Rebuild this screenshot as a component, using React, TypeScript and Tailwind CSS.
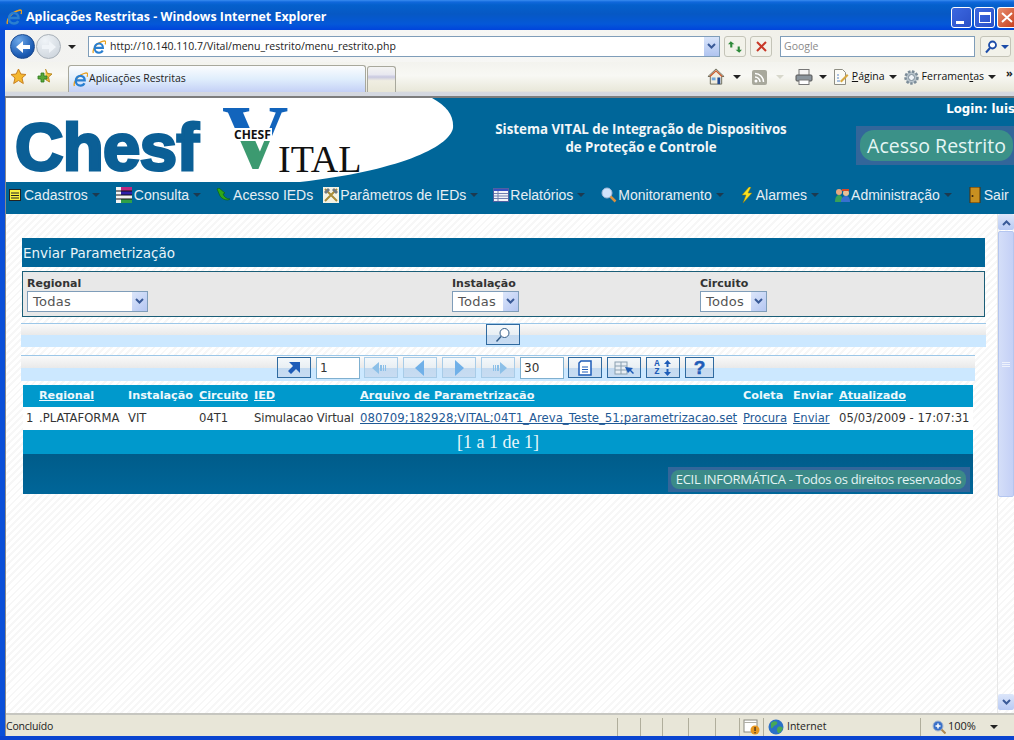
import type { ReactNode } from "react";

const tahoma = "font-['DejaVu_Sans',sans-serif]";

const IeIcon = ({ size = 16 }: { size?: number }) => (
  <svg width={size} height={size} viewBox="0 0 16 16" aria-hidden="true">
    <path d="M1.500 15C0 11 5 3 14 1c2 0 2 2 1 4" fill="none" stroke="#e8a020" strokeWidth="1.400" />
    <path d="M3.500 9H12.500C12.500 6 10.500 4 8 4C5 4 3 6.500 3 9.500C3 12.500 5 14.500 8 14.500C10 14.500 11.500 13.500 12.200 12" fill="none" stroke="#2a7fd0" strokeWidth="2.400" />
  </svg>
);

const Arrow = ({ dir, color = "white" }: { dir: "left" | "right"; color?: string }) => (
  <svg width="18" height="16" viewBox="0 0 18 16" aria-hidden="true">
    <path
      d={dir === "left" ? "M2 8l7-6v4h7v4H9v4z" : "M16 8L9 2v4H2v4h7v4z"}
      fill={color}
    />
  </svg>
);

const Caret = ({ className = "" }: { className?: string }) => (
  <span className={`inline-block h-0 w-0 border-x-[4px] border-t-[4px] border-x-transparent ${className}`} />
);

const SmallChevron = () => (
  <svg width="9" height="7" viewBox="0 0 9 7" aria-hidden="true">
    <path d="M1 1l3.500 3.500L8 1" fill="none" stroke="#3a5a98" strokeWidth="2" />
  </svg>
);

const ToolbarIcons = () => (
  <div className="ml-auto flex items-center self-center font-['Open_Sans',sans-serif] text-[10.500px] text-[#222]">
    <svg width="18" height="18" viewBox="0 0 19 19" aria-hidden="true">
      <path d="M9.500 1L1 9h2.500v8h12V9H18z" fill="#f1ede0" stroke="#6b6b5a" />
      <path d="M3 9l6.500-6L16 9" fill="none" stroke="#c75a2e" strokeWidth="1.500" />
      <rect x="11" y="10" width="3" height="7" fill="#234a8f" />
      <rect x="5" y="10" width="4" height="3" fill="#6fa6dc" />
    </svg>
    <Caret className="ml-[8px] border-t-[#222]" />
    <div className="ml-[11px] flex h-[15px] w-[15px] items-center justify-center rounded-[2px] bg-[#a8a89c]">
      <svg width="11" height="11" viewBox="0 0 11 11" aria-hidden="true">
        <circle cx="2" cy="9" r="1.500" fill="#fff" />
        <path d="M1 5a5 5 0 015 5M1 1.500A8.500 8.500 0 019.500 10" fill="none" stroke="#fff" strokeWidth="1.500" />
      </svg>
    </div>
    <Caret className="ml-[9px] border-t-[#d8d8cc]" />
    <svg className="ml-[11px]" width="18" height="18" viewBox="0 0 18 18" aria-hidden="true">
      <rect x="4" y="1.500" width="10" height="6" fill="#f4f4f4" stroke="#777" />
      <rect x="1" y="7" width="16" height="6" rx="1" fill="#8a949c" stroke="#555" />
      <rect x="4" y="12" width="10" height="4.500" fill="#fff" stroke="#777" />
    </svg>
    <Caret className="ml-[6px] border-t-[#222]" />
    <svg className="ml-[6px]" width="17" height="18" viewBox="0 0 17 18" aria-hidden="true">
      <path d="M1.500 1.500h8l3 3v12h-11z" fill="#fbfbf6" stroke="#8e8e84" />
      <path d="M4 7h2M4 10h2M4 13h3" stroke="#5b87c8" />
      <path d="M7 13l7-7 1.500 1.500-7 7z" fill="#d8a840" />
    </svg>
    <span className="ml-[2px] text-[#111]"><u>P</u>ágina</span>
    <Caret className="ml-[4px] border-t-[#222]" />
    <svg className="ml-[6px]" width="17" height="17" viewBox="0 0 17 17" aria-hidden="true">
      <circle cx="8.500" cy="8.500" r="6" fill="#b8c4cc" stroke="#7c8c98" strokeWidth="2.500" strokeDasharray="2.500 1.500" />
      <circle cx="8.500" cy="8.500" r="3" fill="#f0f4f8" stroke="#7c8c98" />
    </svg>
    <span className="ml-[2px] text-[#111]">Ferramen<u>t</u>as</span>
    <Caret className="ml-[4px] border-t-[#222]" />
    <span className="mb-[10px] ml-[10px] w-[8px] text-[11px] font-bold leading-none">»</span>
  </div>
);

const BrowserChrome = () => (
  <div className={`${tahoma} shrink-0`}>
    {/* title bar */}
    <div className="flex h-[30px] items-center bg-[linear-gradient(#3a8cf0_0,#1068dc_2px,#0560cc_5px,#0658c4_14px,#0458d8_24px,#0044dc_100%)] pl-[6px] pt-[4px]">
      <IeIcon size={16} />
      <span className="ml-[4px] font-['Open_Sans',sans-serif] text-[12.400px] font-bold text-white">
        Aplicações Restritas - Windows Internet Explorer
      </span>
      <div className="ml-auto flex gap-[2px]">
        <div className="flex h-[21px] w-[21px] items-end rounded-[3px] border border-white bg-[linear-gradient(135deg,#3c68e0,#2a50c8)] pb-[3px] pl-[4px]">
          <span className="h-[3px] w-[8px] bg-white" />
        </div>
        <div className="flex h-[21px] w-[21px] items-center justify-center rounded-[3px] border border-white bg-[linear-gradient(135deg,#3c68e0,#2a50c8)]">
          <span className="h-[11px] w-[12px] border-[1px] border-t-[3px] border-white" />
        </div>
        <div className="flex h-[21px] w-[17px] items-center justify-start overflow-hidden rounded-l-[3px] border-y border-l border-white bg-[linear-gradient(135deg,#e89070,#c84020)] pl-[3px]">
          <svg width="12" height="11" viewBox="0 0 12 11" aria-hidden="true">
            <path d="M1 1l10 9M11 1L1 10" stroke="#fff" strokeWidth="2" />
          </svg>
        </div>
      </div>
    </div>
    {/* address row */}
    <div className="flex h-[32px] items-center border-l-[5px] border-[#0a4fd8] bg-[linear-gradient(90deg,#f2f2f0,#f7f7f5_50%,#ecebe0)] pl-[5px] pt-[1px]">
      <div className="relative flex h-[25px] w-[73px] items-center">
        <div className="flex h-[25px] w-[25px] items-center justify-center rounded-full border border-[#1a4a90] bg-[radial-gradient(circle_at_35%_25%,#6ea8e8,#1c5cb4_65%,#123e88)]">
          <Arrow dir="left" />
        </div>
        <div className="ml-[1px] flex h-[25px] w-[25px] items-center justify-center rounded-full border border-[#a8b0b8] bg-[radial-gradient(circle_at_35%_25%,#f0f4f8,#c8d0d8)]">
          <Arrow dir="right" color="#f0f4f8" />
        </div>
        <Caret className="ml-[7px] border-t-[#222]" />
      </div>
      <div className="ml-[5px] flex h-[21px] w-[632px] items-center border border-[#7f9db9] bg-white pl-[3px] text-[#222]">
        <IeIcon size={14} />
        <span className="ml-[4px] font-['Open_Sans',sans-serif] text-[10.500px]">http://10.140.110.7/Vital/menu_restrito/menu_restrito.php</span>
        <div className="ml-auto flex h-[19px] w-[15px] items-center justify-center bg-[linear-gradient(#d8e4fa,#b0c4f0)]">
          <SmallChevron />
        </div>
      </div>
      <div className="ml-[4px] flex h-[21px] w-[22px] items-center justify-center rounded-[3px] border border-[#c4c4b8] bg-[#f2f2ea]">
        <svg width="16" height="14" viewBox="0 0 15 13" aria-hidden="true">
          <path d="M7 4L3.500 1 1 4h2v3h2V4zM8 9l3.500 3L14 9h-2V6h-2v3z" fill="#2e8a3a" />
        </svg>
      </div>
      <div className="ml-[4px] flex h-[21px] w-[22px] items-center justify-center rounded-[3px] border border-[#c4c4b8] bg-[#f2f2ea]">
        <svg width="11" height="11" viewBox="0 0 11 11" aria-hidden="true">
          <path d="M1 1l9 9M10 1l-9 9" stroke="#c83828" strokeWidth="2" />
        </svg>
      </div>
      <div className="ml-[8px] flex h-[21px] w-[195px] items-center border border-[#7f9db9] bg-white pl-[3px] font-['Open_Sans',sans-serif] text-[10.500px] text-[#8a8a8a]">
        Google
      </div>
      <div className="ml-[5px] flex h-[21px] w-[31px] items-center rounded-[3px] border border-[#c4c4b8] bg-[#f2f2ea] pl-[3px]">
        <svg width="14" height="14" viewBox="0 0 14 14" aria-hidden="true">
          <circle cx="8.500" cy="5" r="3.500" fill="#fff" stroke="#1c4ca8" strokeWidth="1.800" />
          <path d="M6 8l-4 4.500" stroke="#1c4ca8" strokeWidth="2" />
        </svg>
        <Caret className="ml-[3px] border-t-[#1c4ca8]" />
      </div>
    </div>
    {/* tab row */}
    <div className="flex h-[34px] items-end border-l-[5px] border-[#0a4fd8] bg-[linear-gradient(#f3f3ee,#f8f8f4_40%,#e9e8da_85%,#d4d8e0_90%)] pb-[4px] pl-[5px]">
      <div className="mb-[2px] flex w-[58px] items-center self-center">
        <svg width="17" height="17" viewBox="0 0 17 17" aria-hidden="true">
          <path d="M8.500 1l2.300 5 5.200.5-4 3.500 1.300 5.500-4.800-3-4.800 3L5 10 1 6.500 6.200 6z" fill="#f4b830" stroke="#c88020" />
        </svg>
        <svg className="ml-[9px]" width="17" height="17" viewBox="0 0 17 17" aria-hidden="true">
          <path d="M9.500 1l2 4.500 4.500.5-3.500 3 1 5-4-2.500" fill="#f4c040" stroke="#b88820" />
          <path d="M5 5v3H2v3h3v3h3v-3h3V8H8V5z" fill="#58a838" stroke="#2e7a20" strokeWidth=".8" />
        </svg>
      </div>
      <div className="flex h-[27px] w-[298px] items-center rounded-t-[3px] border-x border-t border-[#a8a89c] bg-[linear-gradient(#fbfcfe,#e0eefc_50%,#c4d0f6)] pl-[4px] text-[10.500px] font-normal text-[#222]">
        <IeIcon size={15} />
        <span className="ml-[1px] font-['Open_Sans',sans-serif]">Aplicações Restritas</span>
      </div>
      <div className="ml-[1px] h-[26px] w-[29px] rounded-t-[3px] border-x border-t border-[#a8a89c] bg-[linear-gradient(#f4f4f2,#e8e8f0_30%,#c8c8e0_40%,#f0eee2_55%,#e8e6d6)]" />
      <ToolbarIcons />
    </div>
  </div>
);

const MenuIcon = ({ name }: { name: string }) => {
  switch (name) {
    case "cadastros":
      return (
        <svg width="12" height="12" viewBox="0 0 12 12" aria-hidden="true">
          <rect x=".5" y=".5" width="11" height="11" fill="#f8f040" stroke="#222" />
          <path d="M2 4h8M2 6.500h8M2 9h8" stroke="#222" />
        </svg>
      );
    case "consulta":
      return (
        <svg width="16" height="16" viewBox="0 0 16 16" aria-hidden="true">
          <rect x="0" y="0" width="5" height="16" fill="#f4f4f4" />
          <rect x="5" y="0" width="11" height="4" fill="#c02880" />
          <rect x="5" y="4" width="11" height="4" fill="#3020a8" />
          <rect x="5" y="8" width="11" height="4" fill="#f0f0f0" />
          <rect x="5" y="12" width="11" height="4" fill="#30a048" />
          <path d="M0 4h16M0 8h16M0 12h16" stroke="#111" />
        </svg>
      );
    case "acesso":
      return (
        <svg width="16" height="14" viewBox="0 0 16 14" aria-hidden="true">
          <path d="M2 1l3 7c2 3 5 4 8 4l2-1c-3 0-6-2-7-5l2-1-6-5z" fill="#2ea818" stroke="#0c5c0c" strokeWidth=".6" />
        </svg>
      );
    case "parametros":
      return (
        <svg width="16" height="16" viewBox="0 0 16 16" aria-hidden="true">
          <rect width="16" height="16" fill="#f4f2e4" />
          <path d="M2 2l12 12M14 2L2 14" stroke="#a88c38" strokeWidth="2" />
          <path d="M1 5l4-4 2 2-4 4zM11 1l4 4-2 2-4-4z" fill="#707880" />
        </svg>
      );
    case "relatorios":
      return (
        <svg width="16" height="14" viewBox="0 0 16 14" aria-hidden="true">
          <rect x=".5" y=".5" width="15" height="13" fill="#f4f4f8" stroke="#5060a0" />
          <rect x="1" y="1" width="14" height="2" fill="#3850c0" />
          <path d="M1 5.500h14M1 8h14M1 10.500h14M5 3v10" stroke="#7080b0" />
        </svg>
      );
    case "monitoramento":
      return (
        <svg width="16" height="16" viewBox="0 0 16 16" aria-hidden="true">
          <circle cx="6" cy="6" r="5" fill="#d0e4fc" stroke="#a0b8d8" />
          <path d="M9.500 9.500l5 5" stroke="#d89040" strokeWidth="2.500" />
        </svg>
      );
    case "alarmes":
      return (
        <svg width="12" height="16" viewBox="0 0 12 16" aria-hidden="true">
          <path d="M8 0L1 8h4l-3 8 9-10H7l3-6z" fill="#f8e020" stroke="#8a7410" strokeWidth=".5" />
        </svg>
      );
    case "administracao":
      return (
        <svg width="15" height="15" viewBox="0 0 15 15" aria-hidden="true">
          <circle cx="4" cy="4" r="3" fill="#e8a880" />
          <path d="M0 14c0-5 2-7 4-7s4 2 4 7z" fill="#38a058" />
          <circle cx="11" cy="5" r="3" fill="#e8c098" />
          <path d="M6 14c0-5 3-6 5-6s4 1 4 6z" fill="#3870d0" />
          <path d="M7 1h7v2H7z" fill="#d84828" />
        </svg>
      );
    default:
      return (
        <svg width="12" height="16" viewBox="0 0 12 16" aria-hidden="true">
          <rect x="1" y="0" width="10" height="16" fill="#c89020" stroke="#503008" />
          <circle cx="3.500" cy="9" r="1" fill="#321" />
        </svg>
      );
  }
};

const MenuCaret = () => <Caret className="ml-[4px] border-t-[#1c3a50]" />;

const MenuBar = () => (
  <nav className="flex h-[32px] items-center pb-[6px] font-['Liberation_Sans',sans-serif] text-[14px] text-[#e6eef4]">
    <div className="ml-[3px] flex items-center">
      <MenuIcon name="cadastros" />
      <span className="ml-[3px]">Cadastros</span>
      <MenuCaret />
    </div>
    <div className="ml-[16px] flex items-center">
      <MenuIcon name="consulta" />
      <span className="ml-[2px]">Consulta</span>
      <MenuCaret />
    </div>
    <div className="ml-[14px] flex items-center">
      <MenuIcon name="acesso" />
      <span className="ml-[2px]">Acesso IEDs</span>
    </div>
    <div className="ml-[10px] flex items-center">
      <MenuIcon name="parametros" />
      <span className="ml-[1px]">Parâmetros de IEDs</span>
      <MenuCaret />
    </div>
    <div className="ml-[15px] flex items-center">
      <MenuIcon name="relatorios" />
      <span className="ml-[1px]">Relatórios</span>
      <MenuCaret />
    </div>
    <div className="ml-[16px] flex items-center">
      <MenuIcon name="monitoramento" />
      <span className="ml-[1px]">Monitoramento</span>
      <MenuCaret />
    </div>
    <div className="ml-[17px] flex items-center">
      <MenuIcon name="alarmes" />
      <span className="ml-[3px]">Alarmes</span>
      <MenuCaret />
    </div>
    <div className="ml-[16px] flex items-center">
      <MenuIcon name="administracao" />
      <span className="ml-[1px]">Administração</span>
      <MenuCaret />
    </div>
    <div className="ml-[17px] flex items-center">
      <MenuIcon name="sair" />
      <span className="ml-[3px]">Sair</span>
    </div>
  </nav>
);

const Header = () => (
  <header className="relative h-[116px] shrink-0 overflow-hidden bg-[#006699]">
    <svg className="absolute left-0 top-0" width="460" height="85" viewBox="0 0 460 85" aria-hidden="true">
      <path d="M0 0H426C441 8 448 18 447 30C443 50 390 73 294 84L280 84H0Z" fill="#fff" />
    </svg>
    <span className="absolute left-[9px] top-[14px] font-['Liberation_Sans',sans-serif] text-[67px] font-bold leading-[70px] tracking-[-0.6px] text-[#0b5f96] [-webkit-text-stroke:3px_#0b5f96]">
      Chesf
    </span>
    <span className="absolute left-[216px] top-[0px] bg-[linear-gradient(#1264bc_0,#1264bc_50%,#3c9a70_50%,#3c9a70_100%)] bg-clip-text font-['Liberation_Serif',serif] text-[92px] font-bold leading-[78px] text-transparent">
      V
    </span>
    <span className="absolute left-[227px] top-[30px] bg-white px-[1px] font-['Open_Sans',sans-serif] text-[12px] font-bold leading-[13px] text-[#111]">
      CHESF
    </span>
    <span className="absolute left-[272px] top-[42px] font-['Liberation_Serif',serif] text-[38px] leading-[38px] text-[#111]">
      ITAL
    </span>
    <span className="absolute right-[-1px] top-[3px] text-[11.800px] font-bold text-white">Login: luis</span>
    <div className="absolute left-[484px] top-[22px] w-[302px] text-center font-['Open_Sans',sans-serif] text-[13.300px] font-bold leading-[18px] text-[#f2f6f8]">
      Sistema VITAL de Integração de Dispositivos
      <br />
      de Proteção e Controle
    </div>
    <div className="absolute left-[850px] top-[28px] h-[39px] w-[158px] bg-[#33669a] pl-[4px] pt-[4px]">
      <div className="flex h-[31px] w-[153px] items-center justify-center rounded-[14px] bg-[#3b9188] font-['Open_Sans',sans-serif] text-[19.500px] text-[#e4f6f4]">
        Acesso Restrito
      </div>
    </div>
    <div className="absolute inset-x-0 bottom-0">
      <MenuBar />
    </div>
  </header>
);

const Select = ({ value, className }: { value: string; className: string }) => (
  <div className={`flex h-[21px] items-center border border-[#7f9db9] bg-white pl-[5px] text-[13px] tracking-[0.3px] text-[#555] ${className}`}>
    <span>{value}</span>
    <div className="ml-auto flex h-[19px] w-[15px] items-center justify-center bg-[linear-gradient(135deg,#dce6fa,#b4c6f2)]">
      <SmallChevron />
    </div>
  </div>
);

const FilterField = ({ label, children }: { label: string; children: ReactNode }) => (
  <div className="flex flex-col items-start">
    <span className="h-[14px] text-[11px] font-bold leading-[13px] text-[#333]">{label}</span>
    <div>{children}</div>
  </div>
);

const ToolButton = ({ children, disabled = false }: { children?: ReactNode; disabled?: boolean }) => (
  <div
    className={`flex h-[21px] w-[34px] items-center justify-center border bg-[linear-gradient(#f4f8fb_0,#e8eef2_55%,#c4daf0_55%,#c8dcf2_100%)] ${
      disabled ? "border-[#a8cce8]" : "border-[#2f6aa0]"
    }`}
  >
    {children}
  </div>
);

const PagerInput = ({ value, className }: { value: string; className: string }) => (
  <div className={`flex h-[22px] items-center border border-[#7fb0d0] bg-white pl-[3px] text-[12px] text-[#333] ${className}`}>
    {value}
  </div>
);

const Pager = () => (
  <div className="ml-[15px] mt-[8px] flex h-[26px] w-[954px] items-start border-t border-[#9cc7e8] bg-[linear-gradient(#fafafa_0,#e9e9e9_48%,#cce8ff_48%,#cce8ff_100%)] pl-[256px] pt-[1px]">
    <ToolButton>
      <svg width="16" height="14" viewBox="0 0 16 14" aria-hidden="true">
        <path d="M14 1v11L10 8 5 13 2 10l5-5-4-4z" fill="#1e5cb8" />
      </svg>
    </ToolButton>
    <PagerInput value="1" className="ml-[5px] w-[44px]" />
    <div className="ml-[4px] flex items-center gap-[5px]">
      <ToolButton disabled>
        <svg width="22" height="14" viewBox="0 0 22 14" aria-hidden="true">
          <path d="M2 7l7-6v12zM10 4h2v6h-2zM13 4h1v6h-1zM15 4h1v6h-1z" fill="#8cc0e8" />
        </svg>
      </ToolButton>
      <ToolButton disabled>
        <svg width="12" height="16" viewBox="0 0 12 16" aria-hidden="true">
          <path d="M10 0v16L1 8z" fill="#70b0e8" />
        </svg>
      </ToolButton>
      <ToolButton disabled>
        <svg width="12" height="16" viewBox="0 0 12 16" aria-hidden="true">
          <path d="M2 0v16l9-8z" fill="#70b0e8" />
        </svg>
      </ToolButton>
      <ToolButton disabled>
        <svg width="22" height="14" viewBox="0 0 22 14" aria-hidden="true">
          <path d="M20 7l-7-6v12zM10 4h2v6h-2zM8 4h1v6H8zM6 4h1v6H6z" fill="#8cc0e8" />
        </svg>
      </ToolButton>
    </div>
    <PagerInput value="30" className="ml-[5px] w-[44px]" />
    <div className="ml-[4px] flex items-center gap-[5px]">
      <ToolButton>
        <svg width="14" height="16" viewBox="0 0 14 16" aria-hidden="true">
          <path d="M3 1h10v14H1V3z" fill="#fff" stroke="#1e5cb8" strokeWidth="1.500" />
          <path d="M4 7h6M4 9.500h6M4 12h6" stroke="#1e5cb8" />
        </svg>
      </ToolButton>
      <ToolButton>
        <svg width="22" height="14" viewBox="0 0 22 14" aria-hidden="true">
          <rect x="2" y="1" width="12" height="12" fill="#e8eef4" stroke="#8aa0b0" />
          <path d="M2 5h12M2 9h12M8 1v12" stroke="#8aa0b0" />
          <path d="M12 6l8 1-2 2 3 3-1 1-3-3-2 2z" fill="#1e5cb8" />
        </svg>
      </ToolButton>
      <ToolButton>
        <span className="font-['Liberation_Mono',monospace] text-[9px] font-bold leading-[8px] text-[#1e5cb8]">
          A
          <br />
          Z
        </span>
        <svg className="ml-[3px]" width="9" height="16" viewBox="0 0 9 16" aria-hidden="true">
          <path d="M4.500 0l3.500 4H5.500v3h-2V4H1zM4.500 16L1 12h2.500V9h2v3H8z" fill="#1e5cb8" />
        </svg>
      </ToolButton>
      <div className="flex h-[21px] w-[29px] items-center justify-center border border-[#2f6aa0] bg-[linear-gradient(#f4f8fb_0,#e8eef2_55%,#c4daf0_55%,#c8dcf2_100%)]">
        <span className="font-['Liberation_Sans',sans-serif] text-[19px] font-bold leading-none text-[#1e5cb8] [-webkit-text-stroke:0.500px_#1e5cb8]">?</span>
      </div>
    </div>
  </div>
);

const ResultTable = () => (
  <table className="ml-[17px] mt-[4px] w-[950px] table-fixed border-collapse text-[11.600px]">
    <colgroup>
      <col className="w-[16px]" />
      <col className="w-[89px]" />
      <col className="w-[71px]" />
      <col className="w-[55px]" />
      <col className="w-[106px]" />
      <col className="w-[383px]" />
      <col className="w-[50px]" />
      <col className="w-[46px]" />
      <col className="w-[134px]" />
    </colgroup>
    <thead>
      <tr className="h-[22px] bg-[#0099cc] text-left text-[11.200px] text-[#eef8fc]">
        <th />
        <th className="font-bold underline [text-decoration-skip-ink:none]">Regional</th>
        <th className="font-bold">Instalação</th>
        <th className="font-bold underline [text-decoration-skip-ink:none]">Circuito</th>
        <th className="font-bold underline [text-decoration-skip-ink:none]">IED</th>
        <th className="font-bold tracking-[0.15px] underline [text-decoration-skip-ink:none]">Arquivo de Parametrização</th>
        <th className="font-bold">Coleta</th>
        <th className="font-bold">Enviar</th>
        <th className="font-bold underline [text-decoration-skip-ink:none]">Atualizado</th>
      </tr>
    </thead>
    <tbody>
      <tr className="h-[23px] bg-white text-[#333]">
        <td className="pl-[3px]">1</td>
        <td className="whitespace-nowrap">.PLATAFORMA</td>
        <td>VIT</td>
        <td>04T1</td>
        <td className="whitespace-nowrap tracking-[-0.1px]">Simulacao Virtual</td>
        <td className="whitespace-nowrap text-[11.720px] text-[#1f5a96] underline [text-decoration-skip-ink:none]">080709;182928;VITAL;04T1_Areva_Teste_51;parametrizacao.set</td>
        <td className="text-[#1f5a96] underline [text-decoration-skip-ink:none]">Procura</td>
        <td className="text-[#1f5a96] underline [text-decoration-skip-ink:none]">Enviar</td>
        <td className="whitespace-nowrap">05/03/2009 - 17:07:31</td>
      </tr>
      <tr className="h-[24px] bg-[#0099cc]">
        <td colSpan={9} className="text-center font-['Liberation_Serif',serif] text-[18px] leading-none text-[#e8f6fa]">
          [1 a 1 de 1]
        </td>
      </tr>
      <tr className="h-[40px] bg-[linear-gradient(#005c8a,#006699)]">
        <td colSpan={9} className="align-bottom">
          <div className="mb-[2px] ml-auto mr-[3px] flex h-[25px] w-[302px] items-center bg-[#33669a] pl-[3px]">
            <div className="flex h-[19px] w-[295px] items-center justify-center rounded-[8px] bg-[#3b8a88] font-['Open_Sans',sans-serif] text-[13px] tracking-[-0.3px] text-[#e4f4f4]">
              ECIL INFORMÁTICA - Todos os direitos reservados
            </div>
          </div>
        </td>
      </tr>
    </tbody>
  </table>
);

const Scrollbar = () => (
  <div className="flex h-full w-[17px] shrink-0 flex-col border-l border-[#e8e8e8] bg-transparent">
    <div className="flex h-[16px] items-center justify-center rounded-[2px] bg-[linear-gradient(#dce6fa,#b8caf4)]">
      <svg className="rotate-180" width="9" height="7" viewBox="0 0 9 7" aria-hidden="true">
        <path d="M1 1l3.500 3.500L8 1" fill="none" stroke="#3a5a98" strokeWidth="2" />
      </svg>
    </div>
    <div className="mt-[1px] flex h-[266px] flex-col items-center justify-center rounded-[2px] border border-[#b4c6f0] bg-[linear-gradient(90deg,#d4def8,#c4d0f6)]">
      <span className="h-[1px] w-[8px] bg-[#eef2fc]" />
      <span className="mt-[1px] h-[1px] w-[8px] bg-[#eef2fc]" />
      <span className="mt-[1px] h-[1px] w-[8px] bg-[#eef2fc]" />
    </div>
    <div className="mb-[3px] mt-auto flex h-[16px] items-center justify-center rounded-[2px] bg-[linear-gradient(#dce6fa,#b8caf4)]">
      <SmallChevron />
    </div>
  </div>
);

const StatusCell = ({ className = "", children }: { className?: string; children?: ReactNode }) => (
  <div className={`flex h-[18px] items-center border-l border-[#b0ae9c] ${className}`}>{children}</div>
);

const StatusBar = () => (
  <div className="flex h-[23px] shrink-0 items-center border-t-2 border-[#c6c6c0] bg-[#e8e6d8] pt-[2px] font-['Open_Sans',sans-serif] text-[10.500px] text-[#222]">
    <span className="w-[611px] shrink-0 tracking-[-0.2px]">Concluído</span>
    <StatusCell className="w-[23px]" />
    <StatusCell className="w-[22px]" />
    <StatusCell className="w-[26px]" />
    <StatusCell className="w-[27px]" />
    <StatusCell className="w-[24px]" />
    <StatusCell className="w-[24px] pl-[3px]">
      <svg width="18" height="16" viewBox="0 0 18 16" aria-hidden="true">
        <rect x="1" y="1" width="13" height="12" fill="#fff" stroke="#8a8a80" />
        <path d="M1 3.500h13" stroke="#b0b0a8" />
        <circle cx="12" cy="11" r="4.500" fill="#e89820" />
        <rect x="11.400" y="8" width="1.300" height="4" fill="#432" />
        <rect x="11.400" y="13" width="1.300" height="1.300" fill="#432" />
      </svg>
    </StatusCell>
    <StatusCell className="w-[157px] pl-[4px]">
      <svg width="16" height="16" viewBox="0 0 16 16" aria-hidden="true">
        <circle cx="8" cy="8" r="7.500" fill="#2a70c8" />
        <path d="M3 4c2-2 5-2 6-1 1 2-1 3-3 4-1 1-2 3-3 2zM10 8c2-1 4 0 5 1-1 3-3 5-5 5-1-2-2-4 0-6z" fill="#48a858" />
      </svg>
      <span className="ml-[3px]">Internet</span>
    </StatusCell>
    <StatusCell className="flex-1 pl-[11px]">
      <svg width="14" height="14" viewBox="0 0 14 14" aria-hidden="true">
        <circle cx="6" cy="6" r="5" fill="#3a70c8" stroke="#a8b8d0" />
        <path d="M3.500 6h5M6 3.500v5" stroke="#fff" strokeWidth="1.500" />
        <path d="M9.500 9.500l4 4" stroke="#b08850" strokeWidth="2" />
      </svg>
      <span className="ml-[2px] text-[11px]">100%</span>
      <Caret className="ml-[14px] border-t-[#222]" />
    </StatusCell>
  </div>
);

export default function App() {
  return (
    <div className={`${tahoma} flex h-[740px] w-[1014px] flex-col overflow-hidden bg-white`}>
      <BrowserChrome />
      <div className="flex min-h-0 flex-1 border-l-[5px] border-[#0a4fd8]">
        <div className="flex min-w-0 flex-1 flex-col">
          <div className="h-[2px] shrink-0 bg-[#7d7d7d]" />
          <div className="flex min-h-0 flex-1 flex-col border-l border-[#8a8a8a]">
            <Header />
            <div className="flex min-h-0 flex-1 bg-[repeating-linear-gradient(135deg,#fff_0,#fff_3px,#f7f7f7_3px,#f7f7f7_5px)]">
              <main className="min-w-0 flex-1 pt-[24px]">
                <div className="ml-[16px] flex h-[29px] w-[963px] items-center bg-[#006699] pl-[1px] pt-[1px] text-[13.500px] text-[#e8f4f8]">
                  Enviar Parametrização
                </div>
                <div className="ml-[16px] mt-[4px] grid h-[46px] w-[963px] grid-cols-[425px_248px_1fr] border border-[#1b5e78] bg-[#e8e8e8] pl-[4px] pt-[5px]">
                  <FilterField label="Regional">
                    <Select value="Todas" className="w-[121px]" />
                  </FilterField>
                  <FilterField label="Instalação">
                    <Select value="Todas" className="w-[67px]" />
                  </FilterField>
                  <FilterField label="Circuito">
                    <Select value="Todos" className="w-[67px]" />
                  </FilterField>
                </div>
                <div className="ml-[15px] mt-[6px] flex h-[24px] w-[965px] items-start justify-center border-t border-[#9cc7e8] bg-[linear-gradient(#fafafa_0,#e9e9e9_48%,#cce8ff_48%,#cce8ff_100%)]">
                  <div className="ml-[-2px] flex h-[21px] w-[34px] items-center justify-center border border-[#2f6aa0] bg-[linear-gradient(#f4f8fb_0,#e8eef2_55%,#c4daf0_55%,#c8dcf2_100%)]">
                    <svg width="16" height="16" viewBox="0 0 16 16" aria-hidden="true">
                      <circle cx="9.500" cy="6" r="4.500" fill="#fff" stroke="#335c88" />
                      <path d="M6 9.500l-4.500 5" stroke="#335c88" strokeWidth="1.500" />
                    </svg>
                  </div>
                </div>
                <Pager />
                <ResultTable />
              </main>
              <Scrollbar />
            </div>
            <StatusBar />
          </div>
        </div>
      </div>
      <div className="h-[4px] shrink-0 bg-[#0a44d0]" />
    </div>
  );
}
